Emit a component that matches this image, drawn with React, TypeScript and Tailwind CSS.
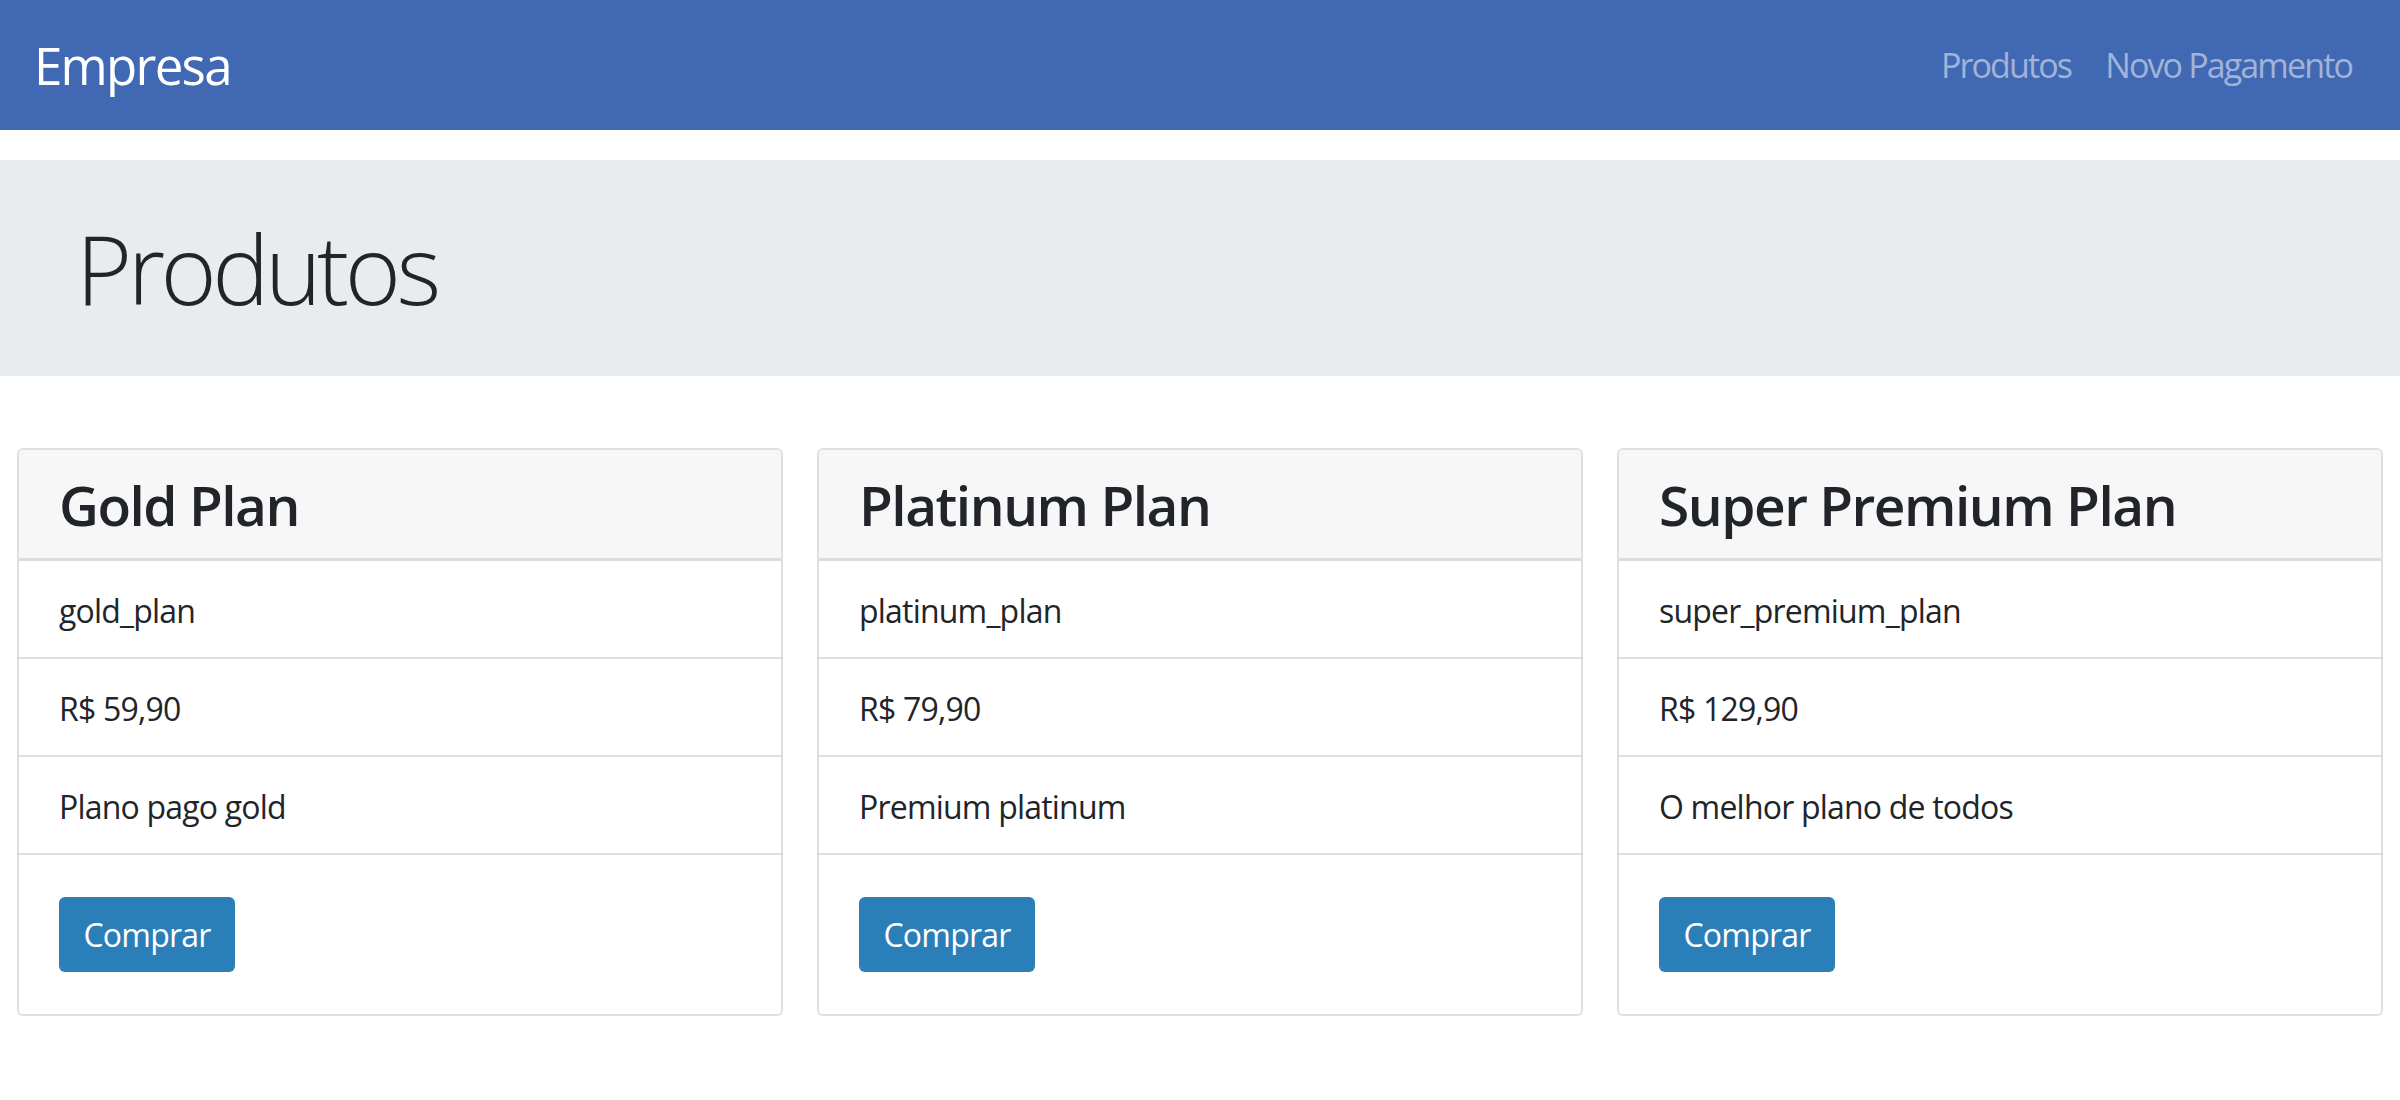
import React from "react";

// Types
interface Plan {
  name: string;
  id: string;
  price: string;
  description: string;
}

// Data
const plans: Plan[] = [
  { name: "Gold Plan", id: "gold_plan", price: "R$ 59,90", description: "Plano pago gold" },
  { name: "Platinum Plan", id: "platinum_plan", price: "R$ 79,90", description: "Premium platinum" },
  { name: "Super Premium Plan", id: "super_premium_plan", price: "R$ 129,90", description: "O melhor plano de todos" },
];

const font = { fontFamily: '"Open Sans", "Noto Sans", sans-serif' };

const PlanCard = ({ plan }: { plan: Plan }) => (
  <div className="flex flex-col border-2 border-[#dfdfdf] rounded-[6px] overflow-hidden bg-white">
    <div className="h-[111px] flex items-center px-[40px] bg-[#f7f7f7] border-b-[3px] border-[#dcdcdc]">
      <h2 className="text-[55px] font-semibold text-[#212529] leading-none tracking-[-0.027em]">{plan.name}</h2>
    </div>
    {[plan.id, plan.price, plan.description].map((text, index) => (
      <div
        key={index}
        className="h-[98px] flex items-center px-[40px] pt-[3px] border-b-2 border-[#dfdfdf] text-[32px] text-[#212529] tracking-[-0.025em]"
      >
        {text}
      </div>
    ))}
    <div className="px-[40px] pt-[42px] pb-[42px]">
      <button className="h-[75px] w-[176px] rounded-[6px] bg-[#2a7fb8] text-white text-[32px] tracking-[-0.025em]">
        Comprar
      </button>
    </div>
  </div>
);

export default function App() {
  return (
    <div className="min-h-screen bg-white" style={font}>
      {/* Navbar */}
      <nav className="h-[130px] bg-[#4168b3] flex items-center justify-between pl-[34px] pr-[48px]">
        <span className="text-[51px] text-white tracking-[-0.034em]">Empresa</span>
        <div className="flex items-center gap-[34px] text-[34px] text-[#a1b3d9] tracking-[-0.055em]">
          <a>Produtos</a>
          <a>Novo Pagamento</a>
        </div>
      </nav>

      {/* Jumbotron */}
      <div className="mt-[30px] h-[216px] bg-[#e9ecef] flex items-center px-[76px]">
        <h1 className="text-[96px] font-light text-[#212529] leading-none tracking-[-0.047em]">Produtos</h1>
      </div>

      {/* Cards */}
      <div className="mt-[72px] px-[17px] grid grid-cols-3 gap-[34px]">
        {plans.map((plan) => (
          <PlanCard key={plan.id} plan={plan} />
        ))}
      </div>
    </div>
  );
}
